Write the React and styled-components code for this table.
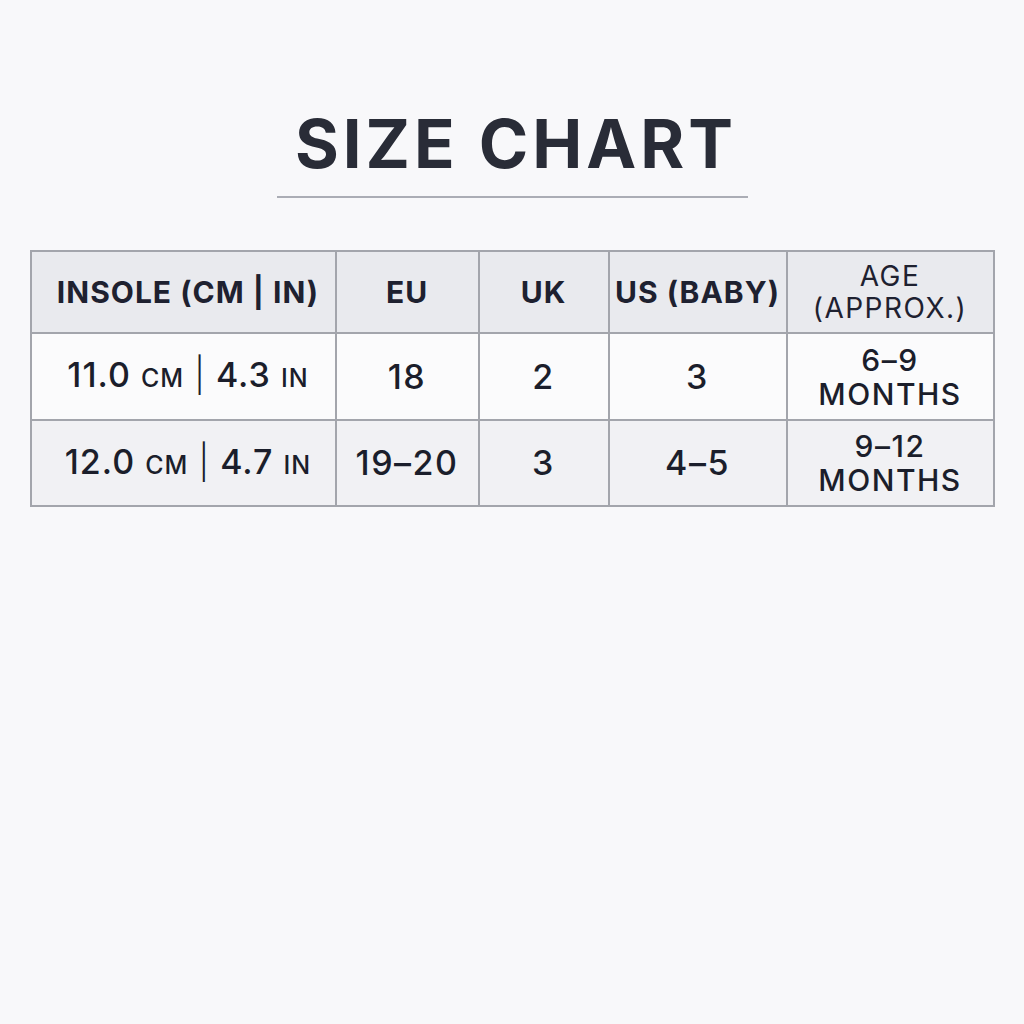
import React from 'react';
import styled, {createGlobalStyle} from 'styled-components';

const Global = createGlobalStyle`
    html, body {
        margin: 0;
        padding: 0;
        background: #f8f8fa;
    }
    body {
        font-family: Inter, "Noto Sans", "DejaVu Sans", sans-serif;
        color: #1e2130;
    }
`;

const Page = styled.div`
    width: 1024px;
    min-height: 1024px;
    display: flex;
    flex-direction: column;
    align-items: center;
    padding-top: 108px;
    box-sizing: border-box;
`;

const Title = styled.h1`
    margin: 0 0 0 8px;
    font-size: 67px;
    line-height: 72px;
    font-weight: 700;
    letter-spacing: 4px;
    color: #292c37;
`;

const Rule = styled.div`
    width: 471px;
    height: 2px;
    background: #abadb5;
    margin-top: 16px;
`;

const Table = styled.table`
    margin-top: 52px;
    width: 963px;
    border-collapse: collapse;
    table-layout: fixed;
    border: 2px solid #9c9ea6;
`;

const HeadCell = styled.th`
    background: #e9eaee;
    border: 2px solid #a3a5ac;
    height: 80px;
    padding: 0 0 0 ${p => p.$first ? '10px' : '0'};
    font-size: ${p => p.$light ? '28px' : '30px'};
    font-weight: ${p => p.$light ? 400 : 700};
    letter-spacing: ${p => p.$light ? '1.5px' : '1px'};
    line-height: 32px;
    text-align: center;
    vertical-align: middle;
    color: #1e2130;
`;

const Row = styled.tr`
    background: ${p => p.$alt ? '#f1f1f4' : '#fbfbfc'};
`;

const Cell = styled.td`
    border: 2px solid #a3a5ac;
    height: ${p => p.$h}px;
    padding: 0 0 0 ${p => p.$first ? '10px' : '0'};
    font-size: ${p => p.$stack ? '30px' : '34px'};
    font-weight: 500;
    letter-spacing: ${p => p.$first ? '1px' : '1.5px'};
    line-height: 34px;
    text-align: center;
    vertical-align: middle;
    color: #1b1e2b;
`;

const Small = styled.span`
    font-size: 25px;
`;

const Bar = styled.span`
    font-weight: 300;
`;

const cols = [305, 143, 130, 178, 207];

const rows = [
    {cm: '11.0', inch: '4.3', eu: '18', uk: '2', us: '3', age: '6–9', h: 85},
    {cm: '12.0', inch: '4.7', eu: '19–20', uk: '3', us: '4–5', age: '9–12', h: 84}
];

export default function App() {
    return (
        <Page>
            <Global/>
            <Title>SIZE CHART</Title>
            <Rule/>
            <Table>
                <colgroup>
                    {cols.map((w, i) => <col key={i} style={{width: w}}/>)}
                </colgroup>
                <thead>
                    <tr>
                        <HeadCell $first>INSOLE (CM | IN)</HeadCell>
                        <HeadCell>EU</HeadCell>
                        <HeadCell>UK</HeadCell>
                        <HeadCell>US (BABY)</HeadCell>
                        <HeadCell $light>AGE<br/>(APPROX.)</HeadCell>
                    </tr>
                </thead>
                <tbody>
                    {rows.map((r, i) => (
                        <Row key={i} $alt={i === 1}>
                            <Cell $h={r.h} $first>{r.cm} <Small>CM</Small> <Bar>|</Bar> {r.inch} <Small>IN</Small></Cell>
                            <Cell $h={r.h}>{r.eu}</Cell>
                            <Cell $h={r.h}>{r.uk}</Cell>
                            <Cell $h={r.h}>{r.us}</Cell>
                            <Cell $h={r.h} $stack>{r.age}<br/>MONTHS</Cell>
                        </Row>
                    ))}
                </tbody>
            </Table>
        </Page>
    );
}
